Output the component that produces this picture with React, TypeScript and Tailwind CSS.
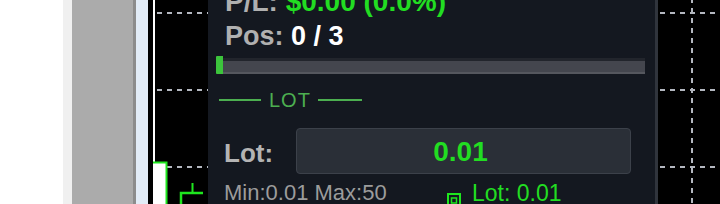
import React from "react";

function DashH({ y, x1, x2 }: { y: number; x1: number; x2: number }) {
  return <line x1={x1} y1={y} x2={x2} y2={y} stroke="#b4b8c0" strokeWidth={2} strokeDasharray="5 5" />;
}

function LeftChart() {
  return (
    <svg width="60" height="204" viewBox="0 0 60 204" className="block">
      <rect x="0" y="0" width="60" height="204" fill="#000" />
      <rect x="5" y="0" width="2" height="204" fill="#ffffff" />
      <DashH y={13} x1={9} x2={60} />
      <DashH y={90} x1={9} x2={60} />
      <DashH y={167} x1={9} x2={60} />
      <rect x="7" y="162" width="11" height="42" fill="#ffffff" />
      <polyline points="5,162.5 18.5,162.5 18.5,204" fill="none" stroke="#1ee61e" strokeWidth={2} />
      <polyline points="33,204 33,193 55,193" fill="none" stroke="#1ee61e" strokeWidth={2.5} />
      <line x1="44.5" y1="183" x2="44.5" y2="193" stroke="#1ee61e" strokeWidth={2} />
    </svg>
  );
}

function RightChart() {
  return (
    <svg width="62" height="204" viewBox="0 0 62 204" className="block">
      <rect x="0" y="0" width="62" height="204" fill="#000" />
      <DashH y={13} x1={2} x2={62} />
      <DashH y={90} x1={2} x2={62} />
      <DashH y={167} x1={2} x2={62} />
      <line x1="34" y1="0" x2="34" y2="204" stroke="#b4b8c0" strokeWidth={2} strokeDasharray="5 5" strokeDashoffset={2} />
    </svg>
  );
}

export default function App() {
  return (
    <div className="flex w-[720px] h-[204px] overflow-hidden bg-black" style={{ fontFamily: '"Liberation Sans", Arial, sans-serif' }}>
      <div className="w-[63px] shrink-0 bg-white" />
      <div className="w-[9px] shrink-0 bg-[#f0f0f0]" />
      <div className="w-[61px] shrink-0 bg-[#ababab]" />
      <div className="w-[3px] shrink-0 bg-[#8c8c8c]" />
      <div className="w-[12px] shrink-0 bg-[#e2ecf7]" />
      <div className="w-[60px] shrink-0">
        <LeftChart />
      </div>
      <div className="w-[447px] shrink-0 bg-[#141820] px-[8px] overflow-hidden">
        <div className="pl-[9px] -mt-[14px] text-[28px] leading-[32px] font-bold whitespace-nowrap">
          <span className="text-[#b0b0b0]">P/L: </span>
          <span className="text-[#22dd22]">$0.00 (0.0%)</span>
        </div>
        <div className="pl-[9px] pt-[2px] text-[27px] leading-[32px] font-bold whitespace-nowrap">
          <span className="text-[#b0b0b0]">Pos: </span>
          <span className="text-white">0 / 3</span>
        </div>
        <div className="mt-[4px] mr-[2px] h-[18px] flex">
          <div className="w-[7px] h-full bg-[#3cc43c] rounded-l-[1px]" />
          <div className="flex-1 flex flex-col pt-[2px]">
            <div className="h-[3px] bg-[#22252c]" />
            <div className="flex-1 bg-[#44464e] border-b-[2px] border-[#55575e]" />
          </div>
        </div>
        <div className="mt-[14px] pl-[3px] flex items-center h-[24px]">
          <div className="w-[42px] h-[2px] bg-[#4caf50]" />
          <span className="ml-[8px] mr-[7px] text-[20px] leading-[24px] tracking-[1px] text-[#4caf50]">LOT</span>
          <div className="w-[44px] h-[2px] bg-[#4caf50]" />
        </div>
        <div className="mt-[16px] pl-[8px] flex items-center h-[46px]">
          <span className="w-[72px] pt-[4px] text-[26px] leading-[30px] font-bold text-[#b4b4b4]">Lot:</span>
          <div className="w-[335px] h-[46px] rounded-[4px] bg-[#2a2f37] border border-[#3c414a] flex items-center justify-center">
            <span className="pt-[2px] pr-[6px] text-[28px] leading-[32px] font-bold text-[#22dd22]">0.01</span>
          </div>
        </div>
        <div className="mt-[6px] pl-[8px] flex items-start h-[30px]">
          <span className="w-[223px] text-[22px] leading-[26px] text-[#9c9c9c] whitespace-nowrap">Min:0.01 Max:50</span>
          <svg width="14" height="16" viewBox="0 0 14 16" className="mt-[13px] shrink-0">
            <rect x="1" y="1" width="12" height="14" fill="none" stroke="#1ee61e" strokeWidth={2} />
            <rect x="4.5" y="5" width="5" height="5" fill="none" stroke="#1ee61e" strokeWidth={1.5} />
          </svg>
          <span className="ml-[11px] text-[23px] leading-[26px] text-[#22dd22] whitespace-nowrap">Lot: 0.01</span>
        </div>
      </div>
      <div className="w-[3px] shrink-0 bg-[#30343c]" />
      <div className="w-[62px] shrink-0">
        <RightChart />
      </div>
    </div>
  );
}
